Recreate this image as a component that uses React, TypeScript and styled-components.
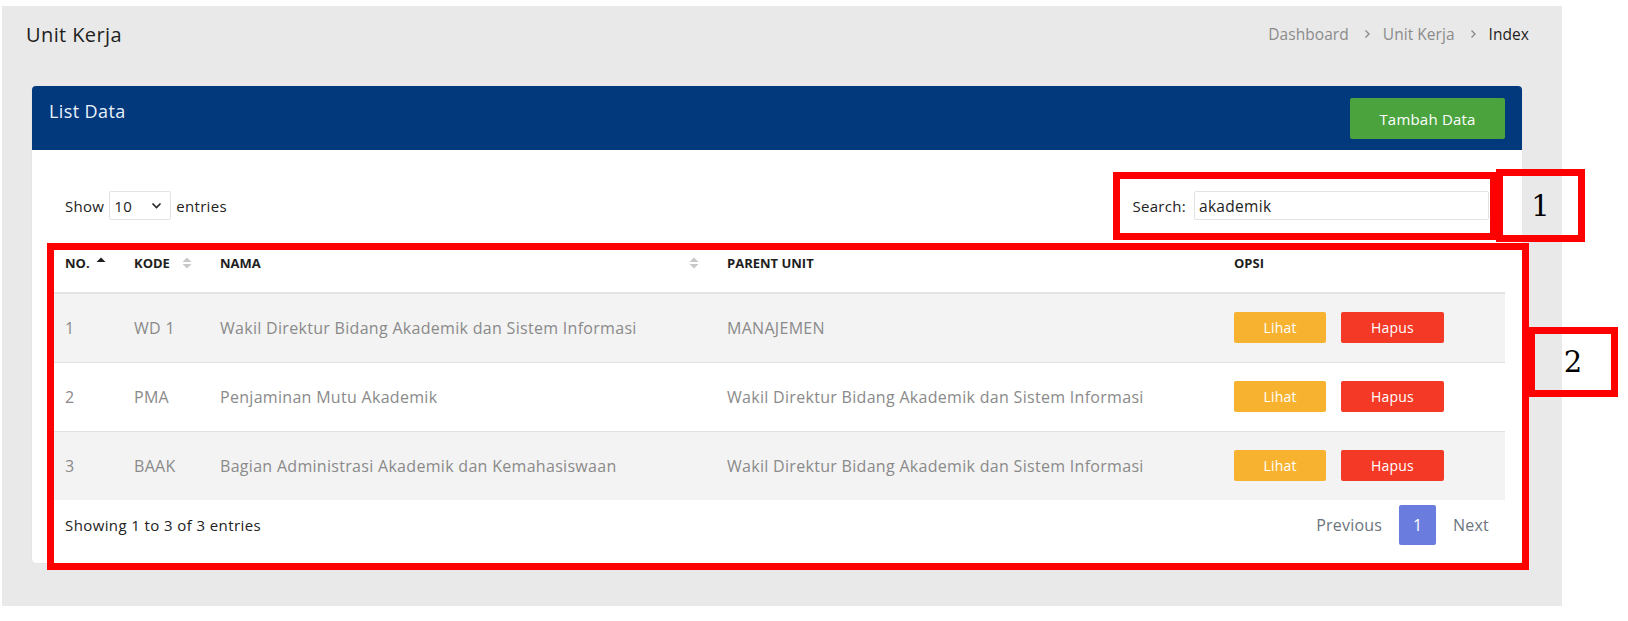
import React from "react";
import styled, { createGlobalStyle } from "styled-components";

const Global = createGlobalStyle`
  html, body { margin: 0; padding: 0; background: #ffffff; }
  body { font-family: "Open Sans", "Noto Sans", sans-serif; color: #222; }
  * { box-sizing: border-box; }
`;

const Stage = styled.div`
  position: relative;
  width: 1628px;
  height: 621px;
  overflow: hidden;
`;

const Panel = styled.main`
  margin: 6px 0 0 2px;
  width: 1560px;
  height: 600px;
  background: #e9e9e9;
  padding-top: 8px;
  display: flex;
  flex-direction: column;
`;

const TitleRow = styled.div`
  height: 40px;
  padding: 0 33px 0 24px;
  display: flex;
  align-items: center;
  justify-content: space-between;
`;

const PageTitle = styled.h1`
  margin: 0;
  font-size: 20px;
  letter-spacing: 0.4px;
  font-weight: 400;
  color: #1e1e1e;
`;

const Crumbs = styled.nav`
  display: flex;
  align-items: center;
  font-size: 15.5px;
  letter-spacing: 0.05px;
`;

const Crumb = styled.span<{ $active?: boolean }>`
  color: ${(p) => (p.$active ? "#1e1e1e" : "#8b8b8b")};
`;

const CrumbSep = styled.span`
  display: inline-flex;
  margin: 0 12px 0 15px;
  color: #8b8b8b;
`;

const Card = styled.section`
  margin: 32px 40px 0 30px;
  background: #ffffff;
  border-radius: 4px;
  box-shadow: 0 0 1px rgba(0, 0, 0, 0.12);
`;

const CardHeader = styled.header`
  height: 64px;
  background: #02397d;
  border-radius: 4px 4px 0 0;
  padding: 12px 17px 0 17px;
  display: flex;
  align-items: flex-start;
  justify-content: space-between;
`;

const CardTitle = styled.h2`
  margin: 0;
  font-size: 18px;
  letter-spacing: 0.4px;
  line-height: 26px;
  font-weight: 400;
  color: #eaf1fb;
`;

const Button = styled.button<{ $bg: string; $w: number; $h: number; $fs: number }>`
  width: ${(p) => p.$w}px;
  height: ${(p) => p.$h}px;
  background: ${(p) => p.$bg};
  border: none;
  border-radius: 2px;
  color: #ffffff;
  font-family: inherit;
  font-size: ${(p) => p.$fs}px;
  letter-spacing: 0.2px;
  padding: 0;
  cursor: pointer;
`;

const CardBody = styled.div`
  padding: 41px 17px 18px 17px;
`;

const Controls = styled.div`
  height: 29px;
  padding: 0 16px;
  display: flex;
  align-items: center;
  justify-content: space-between;
  font-size: 15px;
  letter-spacing: 0.3px;
  color: #222;
`;

const Label = styled.label`
  display: flex;
  align-items: center;
  gap: 5px;
`;

const SelectBox = styled.div`
  width: 62px;
  height: 29px;
  border: 1px solid #e3e3e3;
  border-radius: 2px;
  display: flex;
  align-items: center;
  justify-content: space-between;
  padding: 0 8px 0 4px;
  font-size: 15px;
`;

const SearchInput = styled.div`
  width: 295px;
  height: 29px;
  border: 1px solid #e3e3e3;
  border-radius: 2px;
  display: flex;
  align-items: center;
  padding: 0 4px;
  font-size: 15.5px;
  color: #222;
  margin-left: 3px;
`;

const Table = styled.table`
  width: 100%;
  margin-top: 13px;
  border-collapse: collapse;
  table-layout: fixed;
`;

const Th = styled.th`
  height: 60px;
  padding: 0 12px 0 16px;
  text-align: left;
  font-size: 13px;
  font-weight: 700;
  color: #1e1e1e;
  border-bottom: 2px solid #e4e4e4;
`;

const ThInner = styled.div`
  display: flex;
  align-items: center;
  justify-content: space-between;
`;

const Tr = styled.tr<{ $striped: boolean }>`
  background: ${(p) => (p.$striped ? "#f3f3f3" : "#ffffff")};
`;

const Td = styled.td`
  height: 69px;
  padding: 0 16px;
  font-size: 16px;
  letter-spacing: 0.3px;
  color: #8a8a8a;
  border-top: 1px solid #e2e2e2;
  white-space: nowrap;
`;

const Actions = styled.div`
  display: flex;
  gap: 15px;
`;

const Footer = styled.div`
  margin-top: 5px;
  height: 40px;
  padding: 0 16px;
  display: flex;
  align-items: center;
  justify-content: space-between;
`;

const Info = styled.div`
  font-size: 15px;
  letter-spacing: 0.4px;
  color: #222;
`;

const Pager = styled.div`
  display: flex;
  align-items: center;
  gap: 17px;
  font-size: 16px;
  letter-spacing: 0.2px;
  color: #6c757d;
`;

const PageBtn = styled.span`
  width: 37px;
  height: 40px;
  background: #6a7ddf;
  border-radius: 2px;
  color: #fff;
  display: flex;
  align-items: center;
  justify-content: center;
`;

const Marker = styled.div<{ $x: number; $y: number; $w: number; $h: number }>`
  position: absolute;
  left: ${(p) => p.$x}px;
  top: ${(p) => p.$y}px;
  width: ${(p) => p.$w}px;
  height: ${(p) => p.$h}px;
  border: 7px solid #ff0000;
  display: flex;
  align-items: center;
  justify-content: center;
  font-family: "DejaVu Serif", "Liberation Serif", serif;
  font-size: 29px;
  color: #000;
`;

const SortIcon = ({ mode }: { mode: "asc" | "both" }) => (
  <svg width="10" height="14" viewBox="0 0 10 14">
    <path d="M0.5 6 L5 1.5 L9.5 6 Z" fill={mode === "asc" ? "#1e1e1e" : "#c8c8c8"} />
    {mode === "both" && <path d="M0.5 8 L5 12.5 L9.5 8 Z" fill="#c8c8c8" />}
  </svg>
);

const Chevron = () => (
  <svg width="7" height="10" viewBox="0 0 7 10">
    <path d="M1.5 1.5 L5 5 L1.5 8.5" stroke="#8b8b8b" strokeWidth="1.4" fill="none" />
  </svg>
);

const SmallChevronDown = () => (
  <svg width="11" height="7" viewBox="0 0 11 7">
    <path d="M1.5 1.5 L5.5 5.5 L9.5 1.5" stroke="#222" strokeWidth="1.6" fill="none" />
  </svg>
);

const rows = [
  { no: "1", kode: "WD 1", nama: "Wakil Direktur Bidang Akademik dan Sistem Informasi", parent: "MANAJEMEN" },
  { no: "2", kode: "PMA", nama: "Penjaminan Mutu Akademik", parent: "Wakil Direktur Bidang Akademik dan Sistem Informasi" },
  { no: "3", kode: "BAAK", nama: "Bagian Administrasi Akademik dan Kemahasiswaan", parent: "Wakil Direktur Bidang Akademik dan Sistem Informasi" },
];

export default function App() {
  return (
    <Stage>
      <Global />
      <Panel>
        <TitleRow>
          <PageTitle>Unit Kerja</PageTitle>
          <Crumbs>
            <Crumb>Dashboard</Crumb>
            <CrumbSep><Chevron /></CrumbSep>
            <Crumb>Unit Kerja</Crumb>
            <CrumbSep><Chevron /></CrumbSep>
            <Crumb $active>Index</Crumb>
          </Crumbs>
        </TitleRow>
        <Card>
          <CardHeader>
            <CardTitle>List Data</CardTitle>
            <Button $bg="#4aa33d" $w={155} $h={41} $fs={15}>
              Tambah Data
            </Button>
          </CardHeader>
          <CardBody>
            <Controls>
              <Label>
                Show
                <SelectBox>
                  <span>10</span>
                  <SmallChevronDown />
                </SelectBox>
                entries
              </Label>
              <Label>
                Search:
                <SearchInput>akademik</SearchInput>
              </Label>
            </Controls>
            <Table>
              <colgroup>
                <col style={{ width: 69 }} />
                <col style={{ width: 86 }} />
                <col style={{ width: 507 }} />
                <col style={{ width: 507 }} />
                <col style={{ width: 287 }} />
              </colgroup>
              <thead>
                <tr>
                  <Th><ThInner>NO.<SortIcon mode="asc" /></ThInner></Th>
                  <Th><ThInner>KODE<SortIcon mode="both" /></ThInner></Th>
                  <Th><ThInner>NAMA<SortIcon mode="both" /></ThInner></Th>
                  <Th>PARENT UNIT</Th>
                  <Th>OPSI</Th>
                </tr>
              </thead>
              <tbody>
                {rows.map((r, i) => (
                  <Tr key={r.no} $striped={i % 2 === 0}>
                    <Td>{r.no}</Td>
                    <Td>{r.kode}</Td>
                    <Td>{r.nama}</Td>
                    <Td>{r.parent}</Td>
                    <Td>
                      <Actions>
                        <Button $bg="#f7b32f" $w={92} $h={31} $fs={14}>Lihat</Button>
                        <Button $bg="#f43a26" $w={103} $h={31} $fs={14}>Hapus</Button>
                      </Actions>
                    </Td>
                  </Tr>
                ))}
              </tbody>
            </Table>
            <Footer>
              <Info>Showing 1 to 3 of 3 entries</Info>
              <Pager>
                <span>Previous</span>
                <PageBtn>1</PageBtn>
                <span>Next</span>
              </Pager>
            </Footer>
          </CardBody>
        </Card>
      </Panel>
      <Marker $x={1113} $y={172} $w={384} $h={68} />
      <Marker $x={1496} $y={169} $w={89} $h={73}>1</Marker>
      <Marker $x={47} $y={243} $w={1482} $h={327} />
      <Marker $x={1528} $y={327} $w={90} $h={70}>2</Marker>
    </Stage>
  );
}
